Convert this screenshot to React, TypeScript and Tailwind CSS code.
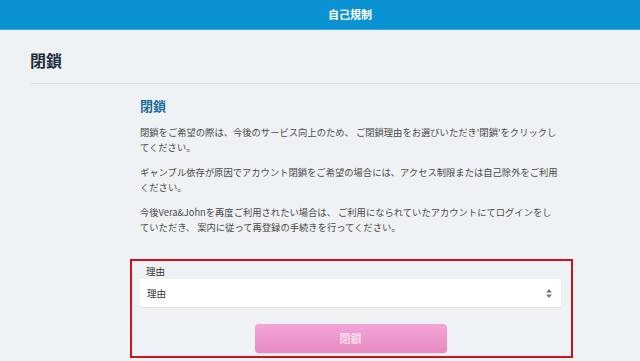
import React from 'react';

const App: React.FC = () => {
  const paragraphs = [
    ["閉鎖をご希望の際は、今後のサービス向上のため、 ご閉鎖理由をお選びいただき'閉鎖'をクリックし", 'てください。'],
    ['ギャンブル依存が原因でアカウント閉鎖をご希望の場合には、アクセス制限または自己除外をご利用', 'ください。'],
    ['今後Vera&Johnを再度ご利用されたい場合は、 ご利用になられていたアカウントにてログインをし', 'ていただき、 案内に従って再登録の手続きを行ってください。'],
  ];

  return (
    <div className="w-[640px] h-[361px] overflow-hidden bg-[#eef2f4] font-['Noto_Sans_CJK_JP',sans-serif]">
      {/* Top bar */}
      <div className="h-[30px] bg-[#0b92d2] border-b border-[#3aa9dd] flex items-center justify-center pl-[60px]">
        <span className="text-white text-[11px] font-bold">自己規制</span>
      </div>

      {/* Page title */}
      <div className="pl-[30px] pt-[20px] h-[53px]">
        <h1 className="text-[16px] font-bold text-[#1d2f3b] leading-[20px]">閉鎖</h1>
      </div>
      <div className="ml-[31px] h-px bg-[#dadfe2]" />

      {/* Content */}
      <div className="ml-[140px] w-[430px] pt-[12px]">
        <h2 className="text-[13px] font-bold text-[#1a6d9c] leading-[20px] mb-[9px]">閉鎖</h2>
        <div className="flex flex-col gap-[10px] text-[9.3px] leading-[15px] text-[#4a4a4a]">
          {paragraphs.map((lines, i) => (
            <p key={i} className="leading-[15px] whitespace-nowrap">
              {lines[0]}
              <br />
              {lines[1]}
            </p>
          ))}
        </div>
      </div>

      {/* Form */}
      <div className="ml-[130px] mt-[24px] w-[443px] h-[99px] border-2 border-[#d0121b] pl-[8px] pr-[10px] pt-[3px]">
        <div className="text-[9.5px] text-[#333] pl-[6px] leading-[14px]">理由</div>
        <div className="mt-[1px] h-[28px] bg-white rounded-[2px] shadow-[0_1px_1px_rgba(0,0,0,0.06)] flex items-center justify-between pl-[7px] pr-[9px]">
          <span className="text-[9.5px] text-[#333]">理由</span>
          <svg width="6" height="9" viewBox="0 0 6 9">
            <path d="M3 0 L6 3.5 L0 3.5 Z" fill="#777" />
            <path d="M3 9 L6 5.5 L0 5.5 Z" fill="#777" />
          </svg>
        </div>
        <div className="flex justify-center mt-[17px]">
          <button className="w-[192px] h-[29px] rounded-[4px] bg-gradient-to-b from-[#f4a5d7] to-[#e68ac1] text-[11px] text-white/70 font-bold shadow-[0_1px_1px_rgba(0,0,0,0.1)]">
            閉鎖
          </button>
        </div>
      </div>
    </div>
  );
};

export default App;
